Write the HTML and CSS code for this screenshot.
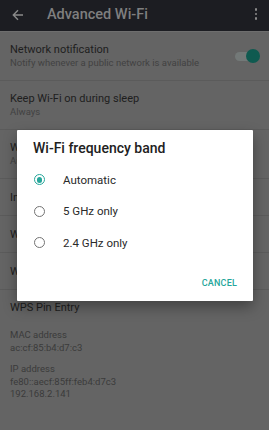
FILE: index.html
```html
<!DOCTYPE html>
<html lang="en">
<head>
  <meta charset="UTF-8">
  <meta name="viewport" content="width=device-width, initial-scale=1.0">
  <title>Advanced Wi-Fi</title>
  <link rel="stylesheet" href="styles.css">
</head>
<body>
  <div class="screen">

    <div class="toolbar">
      <svg class="back" width="12" height="12" viewBox="0 0 12 12">
        <path d="M11 6H1.5M6 1.3L1.3 6L6 10.7" fill="none" stroke="#8a8a8a" stroke-width="1.4"/>
      </svg>
      <span class="toolbar-title">Advanced Wi-Fi</span>
      <span class="menu"><i></i><i></i><i></i></span>
    </div>

    <div class="prefs">
      <div class="pref two-line">
        <div class="pref-text">
          <div class="pref-title">Network notification</div>
          <div class="pref-sub">Notify whenever a public network is available</div>
        </div>
        <div class="switch"><span class="thumb"></span></div>
      </div>
      <div class="pref two-line">
        <div class="pref-text">
          <div class="pref-title">Keep Wi-Fi on during sleep</div>
          <div class="pref-sub">Always</div>
        </div>
      </div>
      <div class="pref two-line">
        <div class="pref-text">
          <div class="pref-title">Wi-Fi frequency band</div>
          <div class="pref-sub">Automatic</div>
        </div>
      </div>
      <div class="pref">
        <div class="pref-title">Install certificates</div>
      </div>
      <div class="pref">
        <div class="pref-title">Wi-Fi Direct</div>
      </div>
      <div class="pref">
        <div class="pref-title">WPS Push Button</div>
      </div>
      <div class="pref last">
        <div class="pref-title">WPS Pin Entry</div>
      </div>

      <div class="info">
        <div class="info-label">MAC address</div>
        <div class="info-value">ac:cf:85:b4:d7:c3</div>
      </div>
      <div class="info">
        <div class="info-label">IP address</div>
        <div class="info-value">fe80::aecf:85ff:feb4:d7c3<br>192.168.2.141</div>
      </div>
    </div>

    <!-- dialog over the dimmed list -->
    <div class="dialog">
      <div class="dialog-title">Wi-Fi frequency band</div>
      <label class="option"><span class="radio checked"></span>Automatic</label>
      <label class="option"><span class="radio"></span>5 GHz only</label>
      <label class="option"><span class="radio"></span>2.4 GHz only</label>
      <div class="actions">
        <button class="text-button">CANCEL</button>
      </div>
    </div>

  </div>
</body>
</html>
```
FILE: styles.css
```css
/* dimmed settings screen with a dialog */
body {
  margin: 0;
  padding: 0;
  font-family: Roboto, "Noto Sans", sans-serif;
  background-color: #646464;
}
.screen {
  position: relative;
  width: 269px;
  height: 430px;
  overflow: hidden;
  background-color: #646464;
}
.toolbar {
  display: flex;
  align-items: center;
  height: 32px;
  padding: 0 10px 0 12px;
  background-color: #1c1d22;
  border-bottom: 1px solid #6e6e6e;
  box-sizing: border-box;
}
.back {
  display: block;
  margin-top: -2px;
}
.toolbar-title {
  margin-left: 23px;
  margin-top: -2px;
  font-size: 14.5px;
  font-weight: 500;
  color: #7f7f7f;
  flex: 1;
}
.menu {
  display: flex;
  flex-direction: column;
  gap: 2px;
  margin-top: -3px;
  margin-right: 2px;
}
.menu i {
  display: block;
  width: 2.5px;
  height: 2.5px;
  border-radius: 50%;
  background-color: #8a8a8a;
}
.pref {
  display: flex;
  align-items: center;
  height: 36px;
  padding: 0 10px;
  border-bottom: 1px solid #5b5b5b;
}
.pref.two-line {
  height: 48px;
}
.pref.last {
  border-bottom: none;
  height: 35px;
}
.pref-text {
  flex: 1;
}
.pref-title {
  font-size: 11px;
  line-height: 13px;
  color: #1e1e1e;
}
.pref-sub {
  font-size: 9.5px;
  line-height: 13px;
  color: #424242;
}
.switch {
  position: relative;
  width: 22px;
  height: 9px;
  margin-right: 2px;
  border-radius: 5px;
  background-color: #737978;
}
.thumb {
  position: absolute;
  right: -3px;
  top: -3px;
  width: 14px;
  height: 14px;
  border-radius: 50%;
  background-color: #0f5a50;
}
.info {
  padding: 4px 10px 5px;
}
.info-label, .info-value {
  font-size: 9.5px;
  line-height: 12.5px;
  color: #3b3b3b;
}
.dialog {
  position: absolute;
  left: 17px;
  top: 130px;
  width: 236px;
  height: 171px;
  box-sizing: border-box;
  padding: 9px 16px 0 16px;
  background-color: #fff;
  border-radius: 1px;
  box-shadow: 0 6px 14px rgba(0, 0, 0, 0.35);
  display: flex;
  flex-direction: column;
}
.dialog-title {
  font-size: 14px;
  font-weight: 500;
  line-height: 18px;
  color: #212121;
  margin-bottom: 7px;
}
.option {
  display: flex;
  align-items: center;
  height: 31.5px;
  font-size: 11.5px;
  color: #2a2a2a;
}
.radio {
  width: 9px;
  height: 9px;
  margin-left: 1px;
  margin-right: 18px;
  border: 1.6px solid #737373;
  border-radius: 50%;
  display: flex;
  align-items: center;
  justify-content: center;
}
.radio.checked {
  border-color: #26a69a;
}
.radio.checked::after {
  content: "";
  width: 5.5px;
  height: 5.5px;
  border-radius: 50%;
  background-color: #26a69a;
}
.actions {
  display: flex;
  justify-content: flex-end;
  margin-top: auto;
  padding-bottom: 7px;
}
.text-button {
  font-family: Roboto, "Noto Sans", sans-serif;
  font-size: 9px;
  font-weight: 500;
  letter-spacing: 0.2px;
  color: #26a69a;
  background: none;
  border: none;
  padding: 6px 0;
  cursor: pointer;
}
```
